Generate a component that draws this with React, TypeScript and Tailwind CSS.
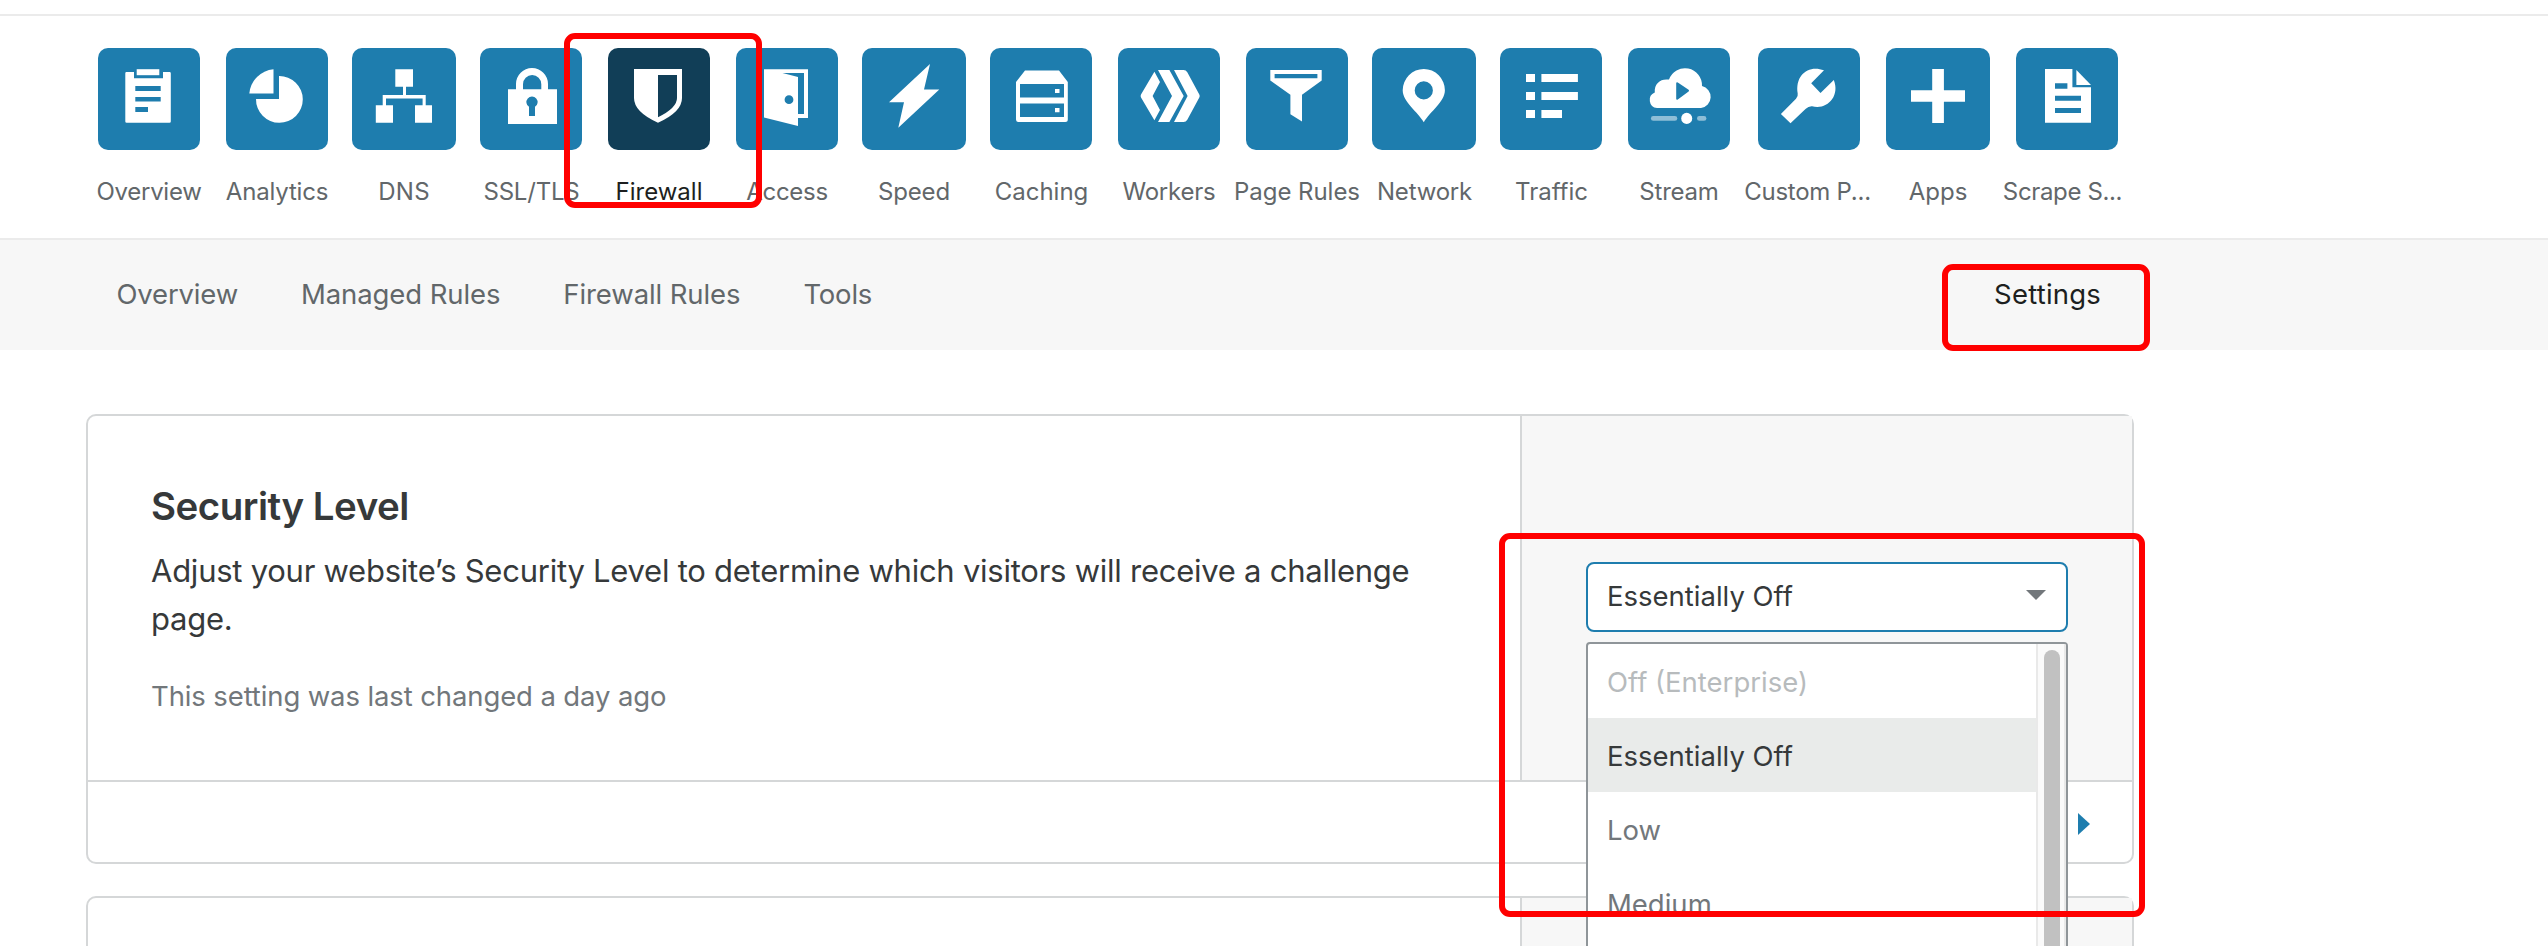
import type { ReactNode } from "react";

const BLUE = "#1e7dae";

type NavItem = { label: string; box: string; text?: string; active?: boolean; icon: ReactNode };

const navItems: NavItem[] = [
  {
    label: "Overview",
    box: "w-[102px]",
    text: "tracking-[-0.28px]",
    icon: (
      <>
        <path fillRule="evenodd" d="M28.5 24H36V30.3H65V24H71.5Q72.8 24 72.8 25.3V73.4Q72.8 74.7 71.5 74.7H28.7Q27.3 74.7 27.3 73.4V25.3Q27.3 24 28.5 24ZM37.3 38H62.7V43H37.3ZM37.3 49H62.7V53.5H37.3ZM37.3 59H50V64H37.3Z" />
        <path d="M38.7 21.2H61.3V27.2H38.7Z" />
      </>
    ),
  },
  {
    label: "Analytics",
    box: "w-[102px] ml-[26px]",
    text: "tracking-[-0.17px]",
    icon: (
      <>
        <path d="M47.5 45.5V21.2A27 27 0 0 0 23.3 45.5Z" />
        <path d="M53 51V28A23.4 23.4 0 1 1 30 51Z" />
      </>
    ),
  },
  {
    label: "DNS",
    box: "w-[104px] ml-[24px]",
    text: "tracking-[0.3px]",
    icon: (
      <path d="M43.3 21.2H61V38.7H54V47H73.7V57.3H80V74.7H63V57.3H70.6V50.6H34V57.3H41V74.7H23.8V57.3H30.7V47H51V38.7H43.3Z" />
    ),
  },
  {
    label: "SSL/TLS",
    box: "w-[102px] ml-[24px]",
    text: "tracking-[-0.2px] pl-px",
    icon: (
      <path fillRule="evenodd" d="M28 41.2H36V36A16 16 0 0 1 68 36V41.2H77V76H28ZM43 41.2H61.3V36.2A9.15 9.15 0 0 0 43 36.2ZM49 58.8V68H55V58.8A5.6 5.6 0 1 0 49 58.8Z" />
    ),
  },
  {
    label: "Firewall",
    box: "w-[102px] ml-[26px]",
    active: true,
    icon: (
      <path fillRule="evenodd" d="M26 21H74V50Q74 64 50 74.7Q26 64 26 50ZM50 27V69.2Q69 60 69 50V27Z" />
    ),
  },
  {
    label: "Access",
    box: "w-[102px] ml-[26px]",
    text: "tracking-[-0.3px]",
    icon: (
      <path fillRule="evenodd" d="M28 21.2H72V70H62V78L28 69.5ZM46.5 25H68V66H62V29ZM53 47.3A4.4 4.4 0 1 0 53 56.1A4.4 4.4 0 1 0 53 47.3Z" />
    ),
  },
  {
    label: "Speed",
    box: "w-[104px] ml-[24px]",
    text: "tracking-[-0.2px]",
    icon: <path d="M68 16L62 41.5H77.3L36.3 79.7L42 54.2H27Z" />,
  },
  {
    label: "Caching",
    box: "w-[102px] ml-[24px]",
    text: "pl-px",
    icon: (
      <>
        <path fillRule="evenodd" d="M35 22.5H69L77.8 34V71.5Q77.8 74 75.3 74H28.5Q26 74 26 71.5V34ZM30 36V49.5H74V36ZM30 55.5V69H74V55.5Z" />
        <path d="M65 41H69.5V45H65ZM65 60H69.5V64.3H65Z" />
      </>
    ),
  },
  {
    label: "Workers",
    box: "w-[102px] ml-[26px]",
    text: "tracking-[-0.2px]",
    icon: (
      <>
        <path d="M36.4 23.7L42 34L34.6 48L42 62L36.4 72.3L23 49.5Q22.2 48 23 46.5Z" />
        <path d="M40 22H51.4L65.7 48L51.4 74H40L54 48Z" />
        <path d="M56 22H65.5Q68 22 69.3 24.3L81.3 46.5Q82.2 48 81.3 49.5L69.3 71.7Q68 74 65.5 74H56L69.6 48Z" />
      </>
    ),
  },
  {
    label: "Page Rules",
    box: "w-[102px] ml-[26px]",
    text: "tracking-[-0.05px]",
    icon: (
      <path fillRule="evenodd" d="M24.3 22H75.7V32.5L56 46.7V73.5L44.4 66.3V46.7L24.3 32.5ZM28.6 26V30.3H71.4V26Z" />
    ),
  },
  {
    label: "Network",
    box: "w-[104px] ml-[24px]",
    text: "tracking-[-0.2px] pl-px",
    icon: (
      <path fillRule="evenodd" d="M51.8 74.3C46 64 30.7 54 30.7 42.3A21.1 21.3 0 0 1 72.9 42.3C72.9 54 57.6 64 51.8 74.3ZM51.8 33.3A9.1 9.1 0 1 0 51.8 51.5A9.1 9.1 0 1 0 51.8 33.3Z" />
    ),
  },
  {
    label: "Traffic",
    box: "w-[102px] ml-[24px]",
    text: "pl-px",
    icon: (
      <path d="M26 26H35V34H26ZM26 44H35V52H26ZM26 62H35V70H26ZM41.4 26H77.9V34H41.4ZM41.4 44H77.9V52H41.4ZM41.4 62H62V70H41.4Z" />
    ),
  },
  {
    label: "Stream",
    box: "w-[102px] ml-[26px]",
    text: "tracking-[-0.2px]",
    icon: (
      <>
        <path fillRule="evenodd" d="M29 60A8 8 0 0 1 26.8 44.6C26 35 33 30.3 41 31.6A17 17 0 0 1 74 38A11.2 11.2 0 0 1 73 60ZM48.2 35.2V50.8Q48.4 52.4 49.8 51.5L60.6 43.6Q61.6 42.7 60.6 41.8L49.8 34.4Q48.4 33.6 48.2 35.2Z" />
        <rect x="22.9" y="68" width="26.4" height="4.8" rx="2.4" opacity="0.5" />
        <ellipse cx="58.7" cy="70.4" rx="5.5" ry="5.6" />
        <rect x="69" y="68" width="9.4" height="4.8" rx="2.4" opacity="0.5" />
      </>
    ),
  },
  {
    label: "Custom P...",
    box: "w-[102px] ml-[28px]",
    text: "tracking-[-0.25px] pr-[3px]",
    icon: (
      <path d="M66 22.3L53.2 35.3L62.5 45L75.8 32C82.5 49 68 62.5 54 58.2Q50.5 58 47.5 61L32.5 75.3L22.9 66L38 50.8Q40.3 48.5 39.7 45.5C36.8 27 50.5 16.5 66 22.3Z" />
    ),
  },
  {
    label: "Apps",
    box: "w-[104px] ml-[26px]",
    icon: <path d="M46.2 21H57.9V42.2H79V53.7H57.9V75H46.2V53.7H25V42.2H46.2Z" />,
  },
  {
    label: "Scrape S...",
    box: "w-[102px] ml-[26px]",
    text: "tracking-[-0.35px] pr-[9px]",
    icon: (
      <>
        <path fillRule="evenodd" d="M29 21H56.4V39.3H75V74.8H29ZM39 35.3H51.4V40.8H39ZM39 47.7H65V52.8H39ZM39 60H65V65H39Z" />
        <path d="M60.4 22L75 37H60.4Z" />
      </>
    ),
  },
];

function NavTile({ item }: { item: NavItem }) {
  return (
    <a className={`flex shrink-0 flex-col items-center ${item.box}`}>
      <span className={`flex h-[102px] w-full justify-center rounded-[10px] ${item.active ? "bg-[#113e57]" : "bg-[#1e7dae]"}`}>
        <svg className="h-[102px] w-full fill-white">{item.icon}</svg>
      </span>
      <span className={`mt-[26px] text-[24px] leading-[32px] whitespace-nowrap ${item.text ?? ""} ${item.active ? "text-[#1d1f20]" : "text-[#62676a]"}`}>
        {item.label}
      </span>
    </a>
  );
}

const options = [
  { label: "Off (Enterprise)", style: "text-[#b7bbbd]" },
  { label: "Essentially Off", style: "bg-[#e9ebea] text-[#36393a]" },
  { label: "Low", style: "text-[#72777b]" },
  { label: "Medium", style: "text-[#72777b]" },
];

function LevelSelect() {
  return (
    <div className="relative h-[70px] w-[482px]">
      <button className="flex h-full w-full items-center justify-between rounded-[8px] border-2 border-[#1e7dae] bg-white pr-5 pl-[19px] text-left">
        <span>Essentially Off</span>
        <svg className="mb-1 h-[10px] w-[20px] fill-[#72777b]" viewBox="0 0 20 10">
          <path d="M0 0H20L10 10Z" />
        </svg>
      </button>
      <div className="absolute top-[80px] left-0 z-10 flex h-[420px] w-[482px] overflow-hidden rounded-[4px] border-2 border-[#8f9599] bg-white">
        <ul className="flex-1">
          {options.map((o) => (
            <li key={o.label} className={`flex h-[74px] items-center pt-[3px] pl-[19px] ${o.style}`}>
              {o.label}
            </li>
          ))}
        </ul>
        <div className="w-[30px] border-x-2 border-[#e9e9e9] bg-[#fafafa] px-[6px] pt-[6px]">
          <div className="h-[380px] w-[16px] rounded-full bg-[#c1c1c1]" />
        </div>
      </div>
    </div>
  );
}

export default function App() {
  return (
    <div className="relative h-[946px] w-[2548px] overflow-hidden bg-white font-['Inter',sans-serif] text-[27.5px] text-[#36393a]">
      <header className="mt-[14px] h-[226px] border-y-2 border-[#ebebeb] pt-8 pl-[98px]">
        <nav className="flex">
          {navItems.map((item) => (
            <NavTile key={item.label} item={item} />
          ))}
        </nav>
      </header>

      <div className="h-[110px] bg-[#f7f7f7]">
        <nav className="flex h-full w-[2101px] items-center gap-[63px] pl-[116.5px] text-[#62676a]">
          <a className="tracking-[-0.18px]">Overview</a>
          <a className="tracking-[-0.1px]">Managed Rules</a>
          <a className="tracking-[-0.1px]">Firewall Rules</a>
          <a className="tracking-[-0.2px]">Tools</a>
          <a className="ml-auto tracking-[0.2px] text-[#1d1f20]">Settings</a>
        </nav>
      </div>

      <main className="mt-16 ml-[86px] flex w-[2048px] flex-col gap-8">
        <section className="rounded-[10px] border-2 border-[#d5d7d8]">
          <div className="flex h-[364px]">
            <div className="flex-1 pt-[66px] pl-[63px]">
              <h2 className="text-[38.5px] leading-[48px] font-semibold tracking-[-0.5px]">Security Level</h2>
              <p className="mt-[17px] w-[1300px] text-[31px] leading-[48px] tracking-[-0.25px]">
                Adjust your website’s Security Level to determine which visitors will receive a challenge page.
              </p>
              <p className="mt-[33px] leading-[40px] tracking-[-0.12px] text-[#72777b]">
                This setting was last changed a day ago
              </p>
            </div>
            <div className="w-[612px] border-l-2 border-[#d5d7d8] bg-[#f7f7f7] pt-[146px] pl-16">
              <LevelSelect />
            </div>
          </div>
          <div className="flex h-[82px] items-center justify-end border-t-2 border-[#d5d7d8] pt-1 pr-[42px]">
            <svg className="h-[22px] w-[12px]" viewBox="0 0 12 22" fill={BLUE}>
              <path d="M0 0L12 11L0 22Z" />
            </svg>
          </div>
        </section>

        <section className="flex h-[300px] rounded-[10px] border-2 border-[#d5d7d8]">
          <div className="flex-1" />
          <div className="w-[612px] border-l-2 border-[#d5d7d8] bg-[#f7f7f7]" />
        </section>
      </main>

      <div className="absolute top-[33px] left-[564px] z-20 h-[175px] w-[198px] rounded-[11px] border-6 border-[#ff0000]" />
      <div className="absolute top-[264px] left-[1942px] z-20 h-[87px] w-[208px] rounded-[11px] border-6 border-[#ff0000]" />
      <div className="absolute top-[533px] left-[1499px] z-20 h-[384px] w-[646px] rounded-[11px] border-6 border-[#ff0000]" />
    </div>
  );
}
